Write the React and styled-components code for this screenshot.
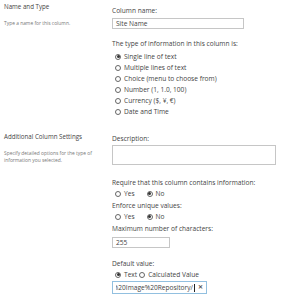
import React from "react";
import styled, { createGlobalStyle } from "styled-components";

const GlobalStyle = createGlobalStyle`
  html, body {
    margin: 0;
    padding: 0;
    background: #ffffff;
  }
  body {
    font-family: "Open Sans", "Noto Sans", sans-serif;
    color: #444444;
  }
`;

const Page = styled.div`
  width: 292px;
  height: 300px;
  overflow: hidden;
`;

const Section = styled.div`
  display: grid;
  grid-template-columns: 108px 1fr;
  margin-top: ${p => p.$top || 0}px;
`;

const Aside = styled.div`
  padding: ${p => p.$pad || 2}px 0 0 4px;
`;

const AsideTitle = styled.div`
  font-size: 6.2px;
  line-height: 9px;
  color: #444444;
  white-space: nowrap;
`;

const AsideText = styled.div`
  margin-top: 8.5px;
  font-size: 4.9px;
  line-height: 7px;
  color: #777777;
`;

const Fields = styled.div`
  padding: ${p => p.$pad || 6}px 0 0 4px;
`;

const Label = styled.div`
  font-size: 6.6px;
  line-height: ${p => p.$lh || 10}px;
  color: #444444;
  white-space: nowrap;
  margin-top: ${p => p.$top || 0}px;
`;

const TextBox = styled.div`
  box-sizing: border-box;
  width: ${p => p.$w}px;
  height: ${p => p.$h}px;
  margin-top: ${p => p.$top || 1}px;
  border: 1px solid ${p => (p.$focus ? "#92c0e0" : "#c6c6c6")};
  padding: 0 3px;
  font-size: 6.6px;
  line-height: ${p => p.$h - 2}px;
  color: #444444;
  white-space: nowrap;
  overflow: hidden;
  display: flex;
  align-items: center;
`;

const Clip = styled.div`
  flex: 1;
  overflow: hidden;
  display: flex;
  justify-content: flex-end;
`;

const Caret = styled.span`
  display: inline-block;
  width: 1px;
  height: 8px;
  background: #222222;
  margin-left: 1px;
`;

const Clear = styled.span`
  margin-left: 3px;
  font-size: 6px;
  font-weight: 700;
  color: #555555;
`;

const RadioList = styled.div`
  margin-top: ${p => p.$top || 0}px;
`;

const RadioRow = styled.div`
  display: flex;
  align-items: center;
  height: ${p => p.$h || 11}px;
  padding-left: 3px;
`;

const Option = styled.label`
  display: flex;
  align-items: center;
  font-size: 6.6px;
  color: #444444;
  white-space: nowrap;
  margin-right: ${p => p.$gap || 0}px;
`;

const Dot = styled.span`
  box-sizing: border-box;
  width: 6px;
  height: 6px;
  border-radius: 50%;
  border: 1px solid #666666;
  margin-right: 3px;
  display: flex;
  align-items: center;
  justify-content: center;

  &::after {
    content: "";
    width: 3px;
    height: 3px;
    border-radius: 50%;
    background: ${p => (p.$on ? "#333333" : "transparent")};
  }
`;

const Radio = ({ on, gap, children }) => (
  <Option $gap={gap}>
    <Dot $on={on} />
    {children}
  </Option>
);

const types = [
  "Single line of text",
  "Multiple lines of text",
  "Choice (menu to choose from)",
  "Number (1, 1.0, 100)",
  "Currency ($, ¥, €)",
  "Date and Time"
];

export default function App() {
  return (
    <Page>
      <GlobalStyle />
      <Section>
        <Aside $pad={2}>
          <AsideTitle>Name and Type</AsideTitle>
          <AsideText>Type a name for this column.</AsideText>
        </Aside>
        <Fields $pad={6}>
          <Label>Column name:</Label>
          <TextBox $w={132} $h={11} $top={2}>Site Name</TextBox>
          <Label $top={10}>The type of information in this column is:</Label>
          <RadioList $top={2}>
            {types.map((t, i) => (
              <RadioRow key={t}>
                <Radio on={i === 0}>{t}</Radio>
              </RadioRow>
            ))}
          </RadioList>
        </Fields>
      </Section>
      <Section $top={14}>
        <Aside $pad={1}>
          <AsideTitle>Additional Column Settings</AsideTitle>
          <AsideText>
            Specify detailed options for the type of information you selected.
          </AsideText>
        </Aside>
        <Fields $pad={3}>
          <Label>Description:</Label>
          <TextBox $w={164} $h={20} $top={1} />
          <Label $top={11.5} $lh={11}>
            Require that this column contains information:
          </Label>
          <RadioRow $h={12}>
            <Radio gap={12}>Yes</Radio>
            <Radio on>No</Radio>
          </RadioRow>
          <Label $lh={11}>Enforce unique values:</Label>
          <RadioRow $h={12}>
            <Radio gap={12}>Yes</Radio>
            <Radio on>No</Radio>
          </RadioRow>
          <Label $lh={11}>Maximum number of characters:</Label>
          <TextBox $w={58} $h={11} $top={3.5}>255</TextBox>
          <Label $top={11}>Default value:</Label>
          <RadioRow>
            <Radio on gap={2}>Text</Radio>
            <Radio>Calculated Value</Radio>
          </RadioRow>
          <TextBox $w={95} $h={13} $top={0} $focus>
            <Clip>http://site/Shared%20Image%20Repository/</Clip>
            <Caret />
            <Clear>✕</Clear>
          </TextBox>
        </Fields>
      </Section>
    </Page>
  );
}
